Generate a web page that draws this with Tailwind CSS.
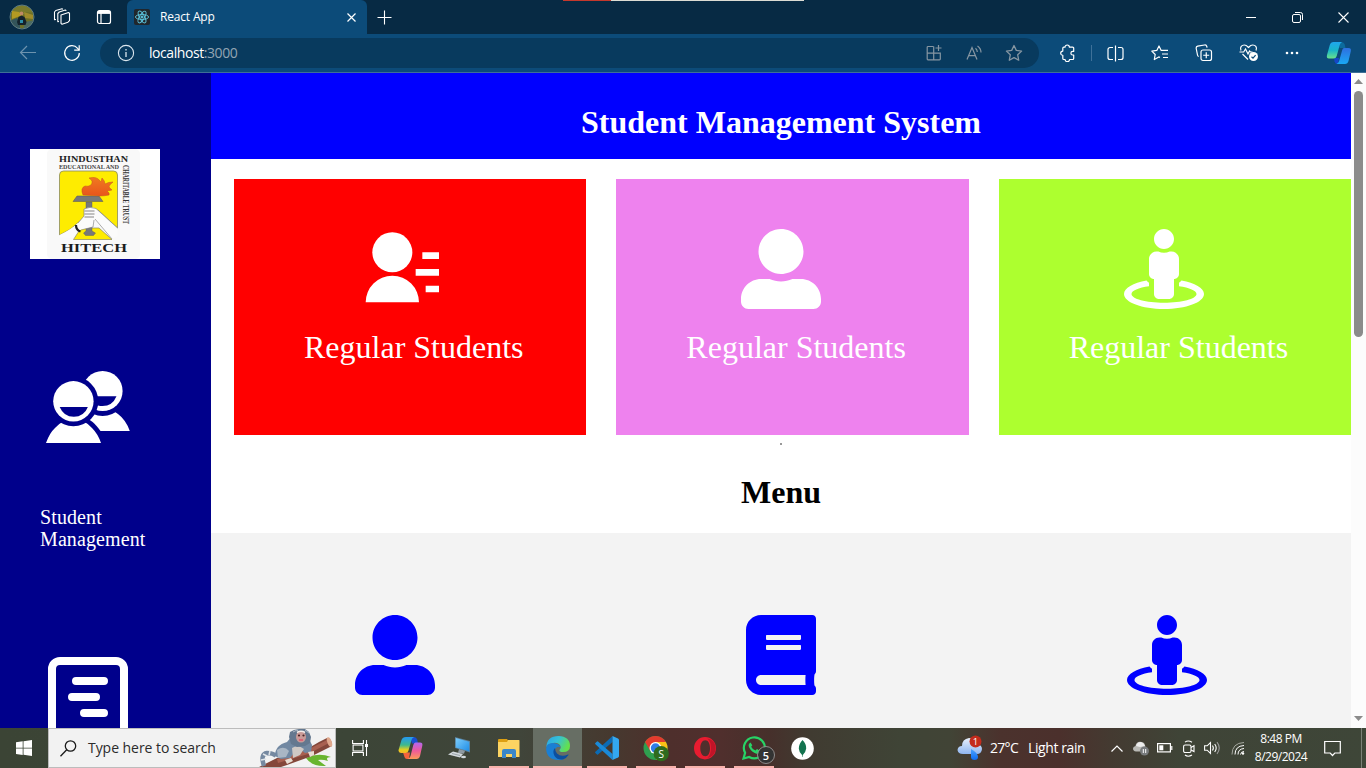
<!DOCTYPE html>
<html lang="en">
<head>
<meta charset="utf-8">
<title>React App</title>
<script src="https://cdn.jsdelivr.net/npm/@tailwindcss/browser@4"></script>
</head>
<body class="w-[1366px] h-[768px] overflow-hidden flex flex-col bg-white font-['Open_Sans','Noto_Sans',sans-serif]">

<svg width="0" height="0" class="absolute">
  <defs>
    <symbol id="user" viewBox="0 0 512 512"><path fill="currentColor" d="M256 288c79.5 0 144-64.5 144-144S335.5 0 256 0 112 64.5 112 144s64.5 144 144 144zm128 32h-55.1c-22.2 10.2-46.9 16-72.9 16s-50.6-5.8-72.9-16H128C57.3 320 0 377.3 0 448v16c0 26.5 21.5 48 48 48h416c26.5 0 48-21.5 48-48v-16c0-70.7-57.3-128-128-128z"/></symbol>
    <symbol id="street" viewBox="0 0 512 512"><path fill="currentColor" d="M367.9 329.76c-4.62 5.3-9.78 10.1-15.9 13.65v22.94c66.52 9.34 112 28.05 112 49.65 0 30.93-93.12 56-208 56S48 446.93 48 416c0-21.6 45.48-40.3 112-49.65v-22.94c-6.12-3.55-11.28-8.35-15.9-13.65C58.87 345.34 0 378.05 0 416c0 53.02 114.62 96 256 96s256-42.98 256-96c0-37.95-58.87-70.66-144.1-86.24zM256 128c35.35 0 64-28.65 64-64S291.35 0 256 0s-64 28.65-64 64 28.65 64 64 64zm-64 192v96c0 17.67 14.33 32 32 32h64c17.67 0 32-14.33 32-32v-96c17.67 0 32-14.33 32-32v-96c0-26.51-21.49-48-48-48h-11.8c-11.07 5.03-23.26 8-36.2 8s-25.13-2.97-36.2-8H208c-26.51 0-48 21.49-48 48v96c0 17.67 14.33 32 32 32z"/></symbol>
    <linearGradient id="gCopA" x1="0" y1="0" x2="0" y2="1"><stop offset="0" stop-color="#1fa6ee"/><stop offset=".5" stop-color="#19b5c8"/><stop offset="1" stop-color="#6be28a"/></linearGradient>
    <linearGradient id="gCopB" x1="0" y1="0" x2="0" y2="1"><stop offset="0" stop-color="#2f6fe0"/><stop offset="1" stop-color="#19a8f5"/></linearGradient>
    <linearGradient id="gCopC" x1="0" y1="0" x2="0" y2="1"><stop offset="0" stop-color="#2499f5"/><stop offset=".5" stop-color="#3fb98c"/><stop offset=".8" stop-color="#e8cf1d"/><stop offset="1" stop-color="#f5b52a"/></linearGradient>
    <linearGradient id="gCopD" x1="0" y1="0" x2="0" y2="1"><stop offset="0" stop-color="#b167f0"/><stop offset=".5" stop-color="#ee5a9a"/><stop offset="1" stop-color="#fb9a58"/></linearGradient>
    <linearGradient id="gEdge" x1="0" y1="0" x2="1" y2=".4"><stop offset="0" stop-color="#2aa4e6"/><stop offset=".5" stop-color="#35c1d8"/><stop offset="1" stop-color="#63e04e"/></linearGradient>
    <linearGradient id="gCloud" x1="0" y1="0" x2="0" y2="1"><stop offset="0" stop-color="#e8f0fc"/><stop offset="1" stop-color="#8fb6f0"/></linearGradient>
    <linearGradient id="gDrop" x1="0" y1="0" x2="0" y2="1"><stop offset="0" stop-color="#4aa3ff"/><stop offset="1" stop-color="#0f6cf0"/></linearGradient>
    <linearGradient id="gFlame" x1="0" y1="0" x2="0" y2="1"><stop offset="0" stop-color="#f07a20"/><stop offset="1" stop-color="#e8551c"/></linearGradient>
    <linearGradient id="gScreen" x1="0" y1="0" x2="1" y2="1"><stop offset="0" stop-color="#7ccdfb"/><stop offset="1" stop-color="#1f8de6"/></linearGradient>
  </defs>
</svg>

<!-- Tab strip -->
<header class="relative flex h-[34px] shrink-0 bg-[#072a44] text-white">
  <div class="absolute top-0 left-[563px] flex h-px w-[241px]"><span class="w-12 bg-[#c5382c]"></span><span class="flex-1 bg-[#dcdcd4]"></span></div>
  <div class="flex w-[44px] items-center justify-end">
    <svg class="mr-[9px]" width="26" height="26" viewBox="0 0 26 26">
      <clipPath id="av"><circle cx="13" cy="13" r="11.6"/></clipPath>
      <g clip-path="url(#av)"><rect width="26" height="26" fill="#6d7028"/><path d="M0 0h26v9l-10-1-8 2-8-3z" fill="#7a7b2c"/><path d="M3 7l7 1 4 3-11 4z" fill="#b39a22"/><path d="M15 8l9 3v4l-8-1z" fill="#a08c2a"/><path d="M0 17l8-3 3 4v8H0z" fill="#33545a"/><path d="M16 18l10-2v10H14z" fill="#4b6a62"/><circle cx="12.500" cy="9.500" r="1.900" fill="#c08a64"/><path d="M9.500 13l3-1.500 3 1.500 2 5-1 3H9l-1-3z" fill="#15222b"/><path d="M11 16h3v3h-3z" fill="#2b8ea8"/></g>
      <circle cx="13" cy="13" r="12" fill="none" stroke="#6c8a92" stroke-width=".8"/>
    </svg>
  </div>
  <div class="flex w-[36px] items-center justify-center">
    <svg width="18" height="18" viewBox="0 0 18 18" fill="none" stroke="#fff" stroke-width="1.1" stroke-linejoin="round"><path d="M8 7l7.500-2.500 1 .7v7.500l-1.500 1.500-6 2-1-.8z"/><path d="M6 13.500l-1.200.2V5.500l1.500-1.500 6-2 1 .8"/><path d="M3 11.500l-1.500.2V4l1.300-1.500L9 .8l1 .6"/></svg>
  </div>
  <div class="flex w-[47px] items-center justify-center pl-[1px]">
    <svg width="16" height="16" viewBox="0 0 16 16" fill="none" stroke="#fff" stroke-width="1.200"><rect x="1.500" y="1.500" width="13" height="13" rx="2"/><path d="M2 3.400h12" stroke-width="3"/><path d="M5 4v10"/></svg>
  </div>
  <div class="flex w-[240px] items-center rounded-t-md bg-[#0c4b79] pl-[7px] pr-[11px]">
    <svg width="16" height="16" viewBox="0 0 16 16" fill="none" stroke="#5cc4dd" stroke-width=".9"><rect width="16" height="16" rx="2" fill="#20262c" stroke="none"/><ellipse cx="8" cy="8" rx="6.600" ry="2.500"/><ellipse cx="8" cy="8" rx="6.600" ry="2.500" transform="rotate(60 8 8)"/><ellipse cx="8" cy="8" rx="6.600" ry="2.500" transform="rotate(120 8 8)"/><circle cx="8" cy="8" r="1.100" fill="#5cc4dd"/></svg>
    <span class="ml-[10px] flex-1 text-[12px] leading-4 tracking-[-0.18px]">React App</span>
    <svg width="9" height="9" viewBox="0 0 9 9" stroke="#fff" stroke-width="1.200"><path d="M.5.5l8 8M8.500.5l-8 8"/></svg>
  </div>
  <div class="flex w-[35px] items-center justify-center"><svg width="15" height="15" viewBox="0 0 15 15" stroke="#fff" stroke-width="1.100"><path d="M7.500.5v14M.5 7.500h14"/></svg></div>
  <div class="ml-auto flex">
    <div class="flex w-[46px] items-center justify-center"><svg width="10" height="10"><path d="M0 5.500h10" stroke="#fff"/></svg></div>
    <div class="flex w-[46px] items-center justify-center"><svg width="11" height="11" viewBox="0 0 11 11" fill="none" stroke="#fff"><rect x=".5" y="2.500" width="8" height="8" rx="1.500"/><path d="M3 .5h5.500a2 2 0 0 1 2 2V8"/></svg></div>
    <div class="flex w-[46px] items-center justify-center"><svg width="11" height="11" viewBox="0 0 11 11" stroke="#fff" stroke-width="1.100"><path d="M.5.5l10 10M10.500.5l-10 10"/></svg></div>
  </div>
</header>

<!-- Toolbar -->
<nav class="flex h-[39px] shrink-0 items-center border-b border-[#3e6f96] bg-[#0c4b79] text-white">
  <div class="flex w-[56px] justify-center"><svg width="18" height="16" viewBox="0 0 18 16" fill="none" stroke="#6d93ae" stroke-width="1.200"><path d="M17 7.500H1.500M8 1L1.500 7.500 8 14"/></svg></div>
  <div class="flex w-[32px] justify-center"><svg width="18" height="18" viewBox="0 0 18 18" fill="none" stroke="#fff" stroke-width="1.200"><path d="M16.300 9A7.300 7.300 0 1 1 14.600 4.300L16 6"/><path d="M16.200 1.200v5h-5"/></svg></div>
  <div class="ml-[12px] flex h-[30px] w-[939px] items-center rounded-full bg-[#083a5e]">
    <svg class="ml-[17px]" width="18" height="18" viewBox="0 0 18 18" fill="none" stroke="#dbe6ee" stroke-width="1.100"><circle cx="9" cy="9" r="7.600"/><path d="M9 8v5M9 5v1.500" stroke-width="1.300"/></svg>
    <span class="ml-[14px] flex-1 text-[14px] leading-5 tracking-[-0.43px]">localhost<span class="text-[#93a5b3]">:3000</span></span>
    <div class="flex w-[40px] justify-center"><svg width="16" height="16" viewBox="0 0 16 16" fill="none" stroke="#8696a2" stroke-width="1.200"><path d="M7.500 1.500H2a.8.8 0 0 0-.8.8V14a.8.8 0 0 0 .8.8h11.500a.8.8 0 0 0 .8-.8V8.200H1.200M7.700 1.500v13.300M12.500 0v6M9.500 3h6"/></svg></div>
    <div class="flex w-[40px] justify-center"><svg width="17" height="16" viewBox="0 0 17 16" fill="none" stroke="#8696a2" stroke-width="1.200"><path d="M1 14.500L6 2.500l5 12M2.700 10.700h6.600M9.500 3.200q1.800 1.500 1.800 3.800M11.500 1q3.500 2.500 3.500 6.500"/></svg></div>
    <div class="mr-[5px] flex w-[40px] justify-center"><svg width="18" height="18" viewBox="0 0 18 18" fill="none" stroke="#8696a2" stroke-width="1.300" stroke-linejoin="round"><path d="M9 1.500l2.300 4.900 5.300.7-3.900 3.700 1 5.400L9 13.600l-4.700 2.600 1-5.400L1.400 7.100l5.300-.7z"/></svg></div>
  </div>
  <div class="flex w-[56px] justify-center pl-[2px]"><svg width="18" height="18" viewBox="0 0 18 18" fill="none" stroke="#fff" stroke-width="1.200" stroke-linejoin="round"><path d="M6 3.200a2.200 2.200 0 0 1 4.400 0h3.300a1 1 0 0 1 1 1v3.200h-1a1.800 1.800 0 0 0 0 3.600h1v3.500a1 1 0 0 1-1 1h-3.200a2.200 2.200 0 0 1-4.400 0H4.800a1 1 0 0 1-1-1v-3.200a2.100 2.100 0 0 1 0-4.200V4.200a1 1 0 0 1 1-1z"/></svg></div>
  <div class="-ml-[4px] h-4 w-px bg-[#3f7199]"></div>
  <div class="flex w-[47px] justify-center"><svg width="17" height="17" viewBox="0 0 17 17" fill="none" stroke="#fff" stroke-width="1.200"><path d="M6 2.500H3a2 2 0 0 0-2 2v8a2 2 0 0 0 2 2h3M11 2.500h3a2 2 0 0 1 2 2v8a2 2 0 0 1-2 2h-3M8.500.5v16"/></svg></div>
  <div class="flex w-[42px] justify-center"><svg width="18" height="17" viewBox="0 0 18 17" fill="none" stroke="#fff" stroke-width="1.200" stroke-linejoin="round"><path d="M9 12.500l-1.200-.6-4.500 2.600.9-5L.8 6.100l5-.7L8 1l2.200 4.400H17M11 9h6M12 12.500h5"/></svg></div>
  <div class="flex w-[45px] justify-center"><svg width="18" height="18" viewBox="0 0 18 18" fill="none" stroke="#fff" stroke-width="1.200"><rect x="6" y="6" width="10.500" height="10.500" rx="2"/><path d="M11.250 8.200v6M8.200 11.250h6M3.700 12.500A2 2 0 0 1 2.500 11L1.200 4.500a2 2 0 0 1 1.500-2.300L9.500 1a2 2 0 0 1 2.300 1.500l.3 1.200"/></svg></div>
  <div class="flex w-[45px] justify-center"><svg width="20" height="18" viewBox="0 0 20 18" fill="none" stroke="#fff" stroke-width="1.200"><path d="M2 6.500C.5 3 3 1 5.300 1 7.500 1 9 3 9.500 3.500 10 3 11.500 1 13.700 1c2.500 0 4.800 2 3.300 5.500M.5 8h4.200l1.800-3 2.500 5 1.500-3 1 1h2M3.500 10l5.500 5.500"/><circle cx="14.500" cy="12.500" r="4.500" fill="#fff" stroke="none"/><path d="M12.500 12.700l1.500 1.400 2.600-3" stroke="#0c4b79"/></svg></div>
  <div class="flex w-[42px] justify-center"><svg width="14" height="4" fill="#fff"><circle cx="2" cy="2" r="1.300"/><circle cx="7" cy="2" r="1.300"/><circle cx="12" cy="2" r="1.300"/></svg></div>
  <div class="ml-[13px] flex w-[26px] justify-center"><svg width="26" height="24" viewBox="0 0 26 24"><path d="M13 1h2.500q2.500 0 3.200 2.500l.8 3.500h-6z" fill="#0c6a9c"/><path d="M8 17h5l-1 6q-2.500.3-3.500-2.500z" fill="#1546c8"/><path d="M7.500 1H16q-1.700.8-2.300 3l-3 11q-.7 2.500-3.200 2.500H3q-2.800 0-2-3.500L3.800 4Q4.700 1 7.500 1z" fill="url(#gCopA)"/><path d="M18 7h4.500q3 0 2.300 3.300L22.500 20q-.8 3-3.500 3h-8.500q2-.8 2.600-3l3-10.500Q16.500 7 18 7z" fill="url(#gCopB)"/></svg></div>
</nav>

<!-- Page -->
<div class="flex h-[655px] shrink-0 overflow-hidden font-['Liberation_Serif',serif]">
  <aside class="flex w-[211px] shrink-0 flex-col bg-[#00008b] pt-[76px] text-white">
    <svg class="ml-[30px] shrink-0" width="130" height="110" viewBox="0 0 130 110" font-family="'Liberation Serif',serif" font-weight="bold">
      <rect width="130" height="110" fill="#fff"/><rect x="17" width="93" height="110" rx="5" fill="#f9f9f9"/>
      <text x="29" y="12.800" font-size="9" textLength="69" lengthAdjust="spacingAndGlyphs" fill="#222">HINDUSTHAN</text>
      <text x="29" y="19.500" font-size="5.500" textLength="60" lengthAdjust="spacingAndGlyphs" fill="#444">EDUCATIONAL AND</text>
      <text transform="translate(92.500 16) rotate(90)" font-size="8" textLength="59" lengthAdjust="spacingAndGlyphs" fill="#333">CHARITABLE TRUST</text>
      <path d="M29.500 86V26q0-4 4-4H83.500q4 0 4 4v53L68 61 50 72Q40 82 29.500 86z" fill="#feec00" stroke="#8a8a60" stroke-width=".8"/>
      <path d="M43.500 90.500L51 79h18l13 11.500z" fill="#feec00" stroke="#8a8a60" stroke-width=".7"/>
      <path d="M56 53h6v29l3.500 2-2 2.500h-8l-2-2.500 2.500-2z" fill="#77787a" stroke="#555" stroke-width=".4"/>
      <path d="M29.500 86Q42 80 48 74l6-7V60q6-3 12-.5L87.500 79v8L82 90 65 70l-1 2-1 6-13 3q-5 3-7 8L29 88z" fill="#fbfbfb"/>
      <path d="M48 74l6-7V60q6-3 12-.5L87.500 79M65 70l17 20M63 78l-12 3M64 71l-1 7" fill="none" stroke="#777" stroke-width=".6"/>
      <path d="M54.500 62h10M54.500 65h10M54.500 68h9.500" stroke="#555" stroke-width=".7"/>
      <path d="M46 76q0 5 4.500 6.500" fill="none" stroke="#222" stroke-width="2.200"/>
      <path d="M47 47h22l4 5.500H43z" fill="#77787a" stroke="#555" stroke-width=".5"/>
      <path d="M53 46q-3-7 2-9 3 1 6-1 3-4-2-7 8-2 11 3 1 2 2-3 3 3 3 6 3-2 8-2-4 3-4 5 2 2 3 3l-5 1q3 2 2 4-5 1-9 1z" fill="url(#gFlame)" stroke="#c4521e" stroke-width=".5"/>
      <text x="31" y="103" font-size="12.500" textLength="66" lengthAdjust="spacingAndGlyphs" fill="#1c1c1c">HITECH</text>
    </svg>
    <svg class="mt-[106px] ml-[40px] shrink-0" width="96" height="86" viewBox="40 365 96 86">
      <mask id="ring"><rect x="40" y="365" width="96" height="86" fill="#fff"/><circle cx="73.400" cy="401.300" r="24.900" fill="#000"/></mask>
      <mask id="back"><rect x="40" y="365" width="96" height="86" fill="#fff"/><circle cx="102.600" cy="391" r="24.900" fill="#000"/><circle cx="73.400" cy="401.300" r="24.900" fill="#000"/><path d="M60 444V425L89 419.500Q95 423 100.500 431v13z" fill="#000"/></mask>
      <g fill="#fff">
        <g mask="url(#ring)"><circle cx="102.600" cy="391" r="20"/><path d="M93 396.300h23.500q-4 9.800-14 9.800-2.500 0-4.500-.6l-6 2z" fill="#00008b"/></g>
        <g mask="url(#back)"><path d="M129.800 431H75q1-8 12-18 8-5 16-5t15 6q8 6 11.800 17z"/></g>
        <circle cx="73.400" cy="401.300" r="20.200"/><path d="M59.700 407h28.200q-4 9.800-14.100 9.800T59.700 407z" fill="#00008b"/>
        <path mask="url(#ring)" d="M46 443q3.500-10 9-15 8-9 18.500-9t18.500 9q6 6 9 15z"/>
      </g>
    </svg>
    <p class="mt-[55px] ml-[40px] text-[20px] leading-[22px] tracking-[0.1px]">Student<br>Management</p>
    <svg class="mt-[107px] ml-[48px] shrink-0" width="80" height="88" viewBox="0 0 80 88" fill="none" stroke="#fff" stroke-width="8" stroke-linecap="round"><path d="M4 88V12a8 8 0 0 1 8-8h56a8 8 0 0 1 8 8v76M28 24h28M24 40h24M36 56h20"/><path d="M8 68v4h4M72 68v4h-4" stroke="none"/></svg>
  </aside>

  <main class="flex w-[1140px] shrink-0 flex-col">
    <h1 class="h-[86px] shrink-0 bg-[#0000ff] pt-[31px] text-center text-[32px] leading-[37px] font-bold text-white">Student Management System</h1>
    <section class="mt-[20px] ml-[23px] flex shrink-0 gap-[30px] text-[32px] leading-[37px] text-white">
      <div class="h-[256px] flex-1 bg-[#ff0000] pt-[50px]">
        <svg class="ml-[125px]" width="80" height="80" viewBox="0 0 24 24" fill="#fff"><circle cx="10" cy="7" r="6"/><path d="M2 22a8 8 0 0 1 16 0zM19 7h5v2h-5zM17 12h7v2h-7zM20 17h4v2h-4z"/></svg>
        <p class="mt-[20px] ml-[70px]">Regular Students</p>
      </div>
      <div class="h-[256px] flex-1 bg-[#ee82ee] pt-[50px]">
        <svg class="ml-[125px]" width="80" height="80"><use href="#user"/></svg>
        <p class="mt-[20px] ml-[70px]">Regular Students</p>
      </div>
      <div class="h-[256px] flex-1 bg-[#adff2f] pt-[50px]">
        <svg class="ml-[125px]" width="80" height="80"><use href="#street"/></svg>
        <p class="mt-[20px] ml-[70px]">Regular Students</p>
      </div>
    </section>
    <div class="mx-auto mt-[8px] h-[2px] w-[2px] shrink-0 bg-[#999]"></div>
    <h2 class="mt-[29px] shrink-0 text-center text-[32px] leading-[37px] font-bold text-black">Menu</h2>
    <section class="mt-[22px] flex flex-1 justify-between bg-[#f3f3f3] pt-[82px] pr-[144px] pl-[144px] text-[#0000ff]">
      <svg width="80" height="80"><use href="#user"/></svg>
      <svg width="80" height="80" viewBox="-32 0 512 512"><path fill="currentColor" d="M448 360V24c0-13.300-10.700-24-24-24H96C43 0 0 43 0 96v320c0 53 43 96 96 96h328c13.300 0 24-10.700 24-24v-16c0-7.500-3.500-14.300-8.900-18.700-4.200-15.400-4.200-59.300 0-74.700 5.400-4.300 8.900-11.100 8.900-18.600zM128 134c0-3.300 2.700-6 6-6h212c3.300 0 6 2.700 6 6v20c0 3.300-2.700 6-6 6H134c-3.300 0-6-2.700-6-6v-20zm0 64c0-3.300 2.700-6 6-6h212c3.300 0 6 2.700 6 6v20c0 3.300-2.700 6-6 6H134c-3.300 0-6-2.700-6-6v-20zm253.400 250H96c-17.700 0-32-14.300-32-32 0-17.600 14.400-32 32-32h285.400c-1.900 17.100-1.900 46.900 0 64z"/></svg>
      <svg width="80" height="80"><use href="#street"/></svg>
    </section>
  </main>

  <div class="flex w-[15px] shrink-0 flex-col items-center bg-[#fcfcfc]">
    <svg class="mt-[6px] shrink-0" width="9" height="5"><path d="M0 5L4.500 0 9 5z" fill="#8b8b8b"/></svg>
    <div class="mt-[7px] h-[246px] w-[9px] shrink-0 rounded-full bg-[#8b8b8b]"></div>
    <svg class="mt-auto mb-[7px] shrink-0" width="9" height="5"><path d="M0 0L4.500 5 9 0z" fill="#8b8b8b"/></svg>
  </div>
</div>

<!-- Taskbar -->
<footer class="flex h-[40px] shrink-0 items-stretch bg-[linear-gradient(90deg,#3b4435_0px,#3c4537_350px,#40453a_520px,#46392f_610px,#4e2f2c_670px,#502f2d_720px,#46302b_770px,#403b31_810px,#3f4436_900px,#414436_950px,#4b322d_1000px,#4b302c_1060px,#443a31_1110px,#3f4437_1180px,#3e4638_1366px)] text-white">
  <div class="flex w-[48px] items-center justify-center"><svg width="16" height="16" viewBox="0 0 16 16" fill="#fff"><path d="M0 2.300L6.700 1.300v6.400H0zM7.500 1.200L16 0v7.700H7.500zM0 8.500h6.700v6.400L0 13.900zM7.500 8.500H16V16l-8.500-1.200z"/></svg></div>
  <div class="flex w-[288px] items-center overflow-hidden border border-[#bcbcbc] bg-[#f2f2f2] text-[#2b2b2b]">
    <svg class="ml-[11px]" width="17" height="17" viewBox="0 0 17 17" fill="none" stroke="#1a1a1a" stroke-width="1.300"><circle cx="10.500" cy="6" r="5.200"/><path d="M6.700 9.800L.5 16.300"/></svg>
    <span class="ml-[11px] w-[135px] shrink-0 text-[14px] leading-5 tracking-[-0.05px] whitespace-nowrap">Type here to search</span>
    <svg class="ml-[36px] shrink-0" width="76" height="38" viewBox="0 0 76 38">
      <path d="M47 29q12-6 25-1-6 0-3 4-6-2-10-1l8 6q-14 1-20-8z" fill="#69b52f"/>
      <path d="M0 38l18-9 30-9 12-7 8-4q5 0 5 8l-20 10-25 9-9 3z" fill="#84473a"/><path d="M18 30l30-9 22-11 2 3-23 12-30 9z" fill="#a86050"/><ellipse cx="70.500" cy="13" rx="2.200" ry="5" transform="rotate(-20 70.500 13)" fill="#e0a88c"/>
      <path d="M5 37Q1 25 8 24q6 0 9 3" fill="none" stroke="#7689a0" stroke-width="4.500"/><path d="M2 31l5-1M4 25l4 2M11 22l-1 4" stroke="#e0e4e8" stroke-width="1.500"/>
      <path d="M16 27q0-11 12-14l6-7h14l5 10-1 7-6 1-5-4-6 4-4 5-9 1z" fill="#7188a2"/>
      <path d="M33 19q6-4 12 1l-4 6-7 3z" fill="#cfc9c5"/><path d="M18 21q7-5 12 1l-3 6-8 1z" fill="#a9b6c4"/>
      <path d="M30 8l1-5 4-2 5-1h6l4 3 2 5-1 6-5 3-8 1-6-3z" fill="#64788f"/><path d="M34 3l4-2 2 2M46 1l4 3" stroke="#aeb9c5" fill="none"/>
      <ellipse cx="42" cy="8" rx="5" ry="5.500" fill="#c99a97"/><path d="M38 3.500q4-2.500 8 0" stroke="#f4ece8" fill="none" stroke-width="1.500"/><circle cx="40" cy="6.500" r="1.100" fill="#4a2525"/><circle cx="44.500" cy="6.500" r="1.100" fill="#4a2525"/><path d="M40 11h4" stroke="#e0526c" stroke-width="1.500"/>
      <path d="M26 31l6-2 2 3-6 3zM49 23l6-1v4l-4 2z" fill="#e8ddd2"/>
    </svg>
  </div>
  <div class="flex flex-1 items-stretch">
    <div class="flex w-[49px] items-center justify-center"><svg width="17" height="16" viewBox="0 0 17 16" fill="none" stroke="#fff" stroke-width="1.100"><path d="M.6 0v3.500h10.800V0M.6 16v-3.500h10.800V16"/><rect x="1.100" y="5" width="9.800" height="6"/><path d="M14.500 0v16"/><rect x="13" y="4" width="3" height="3" fill="#fff" stroke="none"/></svg></div>
    <div class="flex w-[50px] items-center justify-center pl-px"><svg width="25" height="22" viewBox="0 0 25 22"><path d="M12 0h4q2.500 0 3.200 2.500l.8 4h-6z" fill="#1b4fd0"/><path d="M5 15.500h7l-1 6.500h-2q-2 0-2.500-2z" fill="#f4633c"/><path d="M8 0h8q-2 .8-2.500 3l-3 10.500Q10 16 7.500 16H3q-3.200 0-2.300-3.500L3.500 3Q4.500 0 8 0z" fill="url(#gCopC)"/><path d="M17.500 5.500H22q3 0 2.300 3.300L22 19q-.8 3-3.500 3h-8.800q2.300-.8 2.800-3L15.300 8q.6-2.500 2.200-2.500z" fill="url(#gCopD)"/></svg></div>
    <div class="flex w-[49px] items-center justify-center"><svg width="23" height="22" viewBox="0 0 23 22"><path d="M7 0l15 4v11.500L7 11z" fill="#5b7f98"/><path d="M7.800 1l13.400 3.800v9.400L7.800 10.400z" fill="url(#gScreen)"/><path d="M11 12l6 1.700-1 3-6-1z" fill="#8f9aa2"/><path d="M5 14.500l10 2.500-3 3.500-12-3z" fill="#d3d9dd"/><path d="M4 16.500l8 2" stroke="#9aa4ab"/><ellipse cx="15.500" cy="20" rx="2.500" ry="1.300" fill="#d3d9dd"/></svg></div>
    <div class="flex w-[49px] flex-col items-center justify-between pt-[11px]"><svg width="22" height="19" viewBox="0 0 22 19"><path d="M0 1q0-1 1-1h8l1.500 2H20v4H0z" fill="#dd9f12"/><path d="M0 3h9l1-2h11q.5 0 .5.500V18H0z" fill="#fcd462"/><path d="M4 19v-7q0-2 2-2h10q2 0 2 2v7h-4v-4H8v4z" fill="#3a86c8"/></svg><div class="h-[2px] w-[40px] bg-[#f8b1ab]"></div></div>
    <div class="flex w-[49px] flex-col items-center justify-between bg-[#676e64] pt-[8px]"><svg width="24" height="24" viewBox="0 0 24 24"><path d="M.3 11Q1 0 12.500 0 24 .5 24 10q0 6-7 6-4 0-3.500-2 2-1.500 1-4Q12 6 7 7 2 8 .3 11z" fill="url(#gEdge)"/><path d="M.1 13Q0 7 7 7q6.500.5 7.500 4.500-1-1-3-.5-3 1-3 5 .5 6 7 6 4 0 6.500-3-3.500 5-9.500 5Q1 24 .1 13z" fill="#1a7fd4"/><path d="M9 12q-3 3-.5 8 3 4.500 9 3.300 3-1.300 5-4.300.3-.8-.5-.4-7 3-11-1.200-2-2.400-2-5.400z" fill="#0c4f9e"/></svg><div class="h-[2px] w-full bg-[#fcbab4]"></div></div>
    <div class="flex w-[49px] flex-col items-center justify-between pt-[8px]"><svg width="24" height="24" viewBox="0 0 24 24"><path d="M17.500 0v6L3 18.500q-.5.500-1 0L.4 17q-.6-.6 0-1.200z" fill="#0b6bb5"/><path d="M17.500 24v-6L3 5.500q-.5-.5-1 0L.4 7q-.6.600 0 1.200z" fill="#1a8ad8"/><path d="M17.500 0L23 2.500q1 .5 1 1.500v16q0 1-1 1.500L17.500 24z" fill="#33a8f0"/></svg><div class="h-[2px] w-[40px] bg-[#f8b1ab]"></div></div>
    <div class="flex w-[49px] flex-col items-center justify-between pt-[8px]"><svg width="27" height="26" viewBox="-1.500 0 27 26" class="-mb-[2px]"><circle cx="12" cy="12" r="12" fill="#2f9e4f"/><path d="M12 12L1.600 6A12 12 0 0 1 22.400 6z" fill="#e33b2e"/><path d="M12 6h10.400A12 12 0 0 1 13 24z" fill="#fbc116"/><path d="M1.600 6l5.200 9L12 12V6z" fill="#e33b2e"/><circle cx="12" cy="12" r="6" fill="#fff"/><circle cx="12" cy="12" r="4.700" fill="#2f7de8"/><circle cx="17.700" cy="17.700" r="7.600" fill="#2f6b1e"/><text x="17.700" y="21.500" font-size="10" text-anchor="middle" fill="#fff" font-family="'Open Sans',sans-serif">S</text></svg><div class="h-[2px] w-[40px] bg-[#f8b1ab]"></div></div>
    <div class="flex w-[49px] flex-col items-center justify-between pt-[8px]"><svg width="24" height="24" viewBox="0 0 24 24"><path fill-rule="evenodd" d="M12 1a11 11.200 0 1 0 0 22.400A11 11.200 0 1 0 12 1zm.3 3.200c3 0 4.700 3.500 4.700 8s-1.700 8-4.700 8-5-3.500-5-8 2-8 5-8z" fill="#e81c30"/><path d="M14.500 2.500q8 2 8 9.700t-8 9.700q3.500-3.500 3.500-9.700t-3.500-9.700z" fill="#c01428"/></svg><div class="h-[2px] w-[40px] bg-[#f8b1ab]"></div></div>
    <div class="relative flex w-[49px] flex-col items-center justify-between pt-[8px]"><svg width="24" height="24" viewBox="0 0 24 24"><path d="M1.500 22.500l1.600-5.700A10.500 10.500 0 1 1 7.200 21z" fill="none" stroke="#27d366" stroke-width="2.200"/><path d="M8.500 6.500q-3 1.800-1.300 5 2.500 5 7.300 6.200 3 .2 3.500-3l-3-1.700-1.500 1.600q-3-1.200-4.300-3.900l1.100-1.500z" fill="#27d366"/></svg><div class="h-[2px] w-[40px] bg-[#f8b1ab]"></div>
      <span class="absolute top-[19px] left-[29px] flex size-[16px] items-center justify-center rounded-full bg-[#333] text-[11px] leading-none font-semibold outline outline-[#8b8b8b]">5</span></div>
    <div class="flex w-[49px] items-center justify-center"><svg width="23" height="23" viewBox="0 0 23 23"><circle cx="11.500" cy="11.500" r="11.300" fill="#fff"/><path d="M11.500 3q4 4 3.700 8.500-.5 4-3.400 6.500l-.1 2h-.4l-.2-2Q8 15.500 7.800 11.500 7.800 7 11.500 3z" fill="#13734f"/></svg></div>
  </div>

  <div class="flex w-[409px] items-center">
    <svg class="shrink-0" width="27" height="26" viewBox="0 0 27 26"><path d="M6 19q-5 0-5.500-4Q1 11 5 11q0-7 7-8 6 0 8 6 5 1 5 5-.500 5-5 5z" fill="url(#gCloud)"/><path d="M14 14q7 4 7 8 0 3-3.500 3T14 22z" fill="url(#gDrop)"/><circle cx="18.500" cy="6.500" r="6" fill="#c42b1c"/><text x="18.500" y="10" font-size="9.500" text-anchor="middle" fill="#fff" font-family="'Open Sans',sans-serif">1</text></svg>
    <span class="ml-[6px] w-[38px] shrink-0 text-[14px] leading-5 tracking-[-0.7px]">27°C</span>
    <span class="w-[76px] shrink-0 text-[14px] leading-5 tracking-[-0.4px] whitespace-nowrap">Light rain</span>
    <svg class="ml-[7px] shrink-0" width="12" height="7" viewBox="0 0 12 7" fill="none" stroke="#fff" stroke-width="1.200"><path d="M.5 6.500L6 1l5.500 5.500"/></svg>
    <svg class="ml-[10px] shrink-0" width="16" height="15" viewBox="0 0 16 15"><path d="M3 10.500Q0 10 0 7.500 0 5.500 2.500 5 3 1 7 .8q4 0 5 3.200l1 5-3 1.500z" fill="#b9b9b5"/><path d="M3 5Q4 1 8 1q3 1 4 4l-5 1z" fill="#ededed"/><circle cx="11.500" cy="10" r="4.500" fill="#777a7c"/><path d="M10.300 8v4M12.700 8v4" stroke="#fff"/></svg>
    <svg class="ml-[8px] shrink-0" width="16" height="10" viewBox="0 0 16 10" fill="none" stroke="#fff" stroke-width="1.200"><rect x=".6" y=".6" width="12.800" height="8.300"/><rect x="2.300" y="2.300" width="4" height="5" fill="#fff" stroke="none"/><path d="M14.800 3v4"/></svg>
    <svg class="ml-[10px] shrink-0" width="12" height="17" viewBox="0 0 12 17" fill="none" stroke="#fff" stroke-width="1.100"><rect x=".6" y="5" width="7.400" height="7.500" rx="1.500"/><path d="M8 7.500l3-1.700v5.800L8 10M2 2.200q3-2.500 7 0M2 15q3 2.500 7 0"/></svg>
    <svg class="ml-[9px] shrink-0" width="17" height="14" viewBox="0 0 17 14" fill="none" stroke="#fff" stroke-width="1.100"><path d="M.6 4.800h2.600L6.500 1.500v11L3.200 9.200H.6zM8.500 4.500q1.700 2.500 0 5M10.700 3q3 4 0 8"/><path d="M13 1.200q4.500 5.800 0 11.600" stroke="#999"/></svg>
    <svg class="ml-[10px] shrink-0" width="14" height="14" viewBox="0 0 14 14" fill="none" stroke="#fff"><path d="M1 13.500Q1 2 13 1.500" stroke="#a5a8a0"/><path d="M4 13.500Q4 5 13 4.500M7 13.500Q7 8 13 7.500"/><path d="M9.500 13.500q.5-3 3.500-3"/><circle cx="12" cy="12.500" r="1.200" fill="#fff" stroke="none"/></svg>
    <div class="ml-[6px] flex w-[60px] shrink-0 flex-col items-center text-[12px] leading-[18px] tracking-[-0.5px]"><span>8:48 PM</span><span>8/29/2024</span></div>
    <svg class="ml-[13px] shrink-0" width="17" height="17" viewBox="0 0 17 17" fill="none" stroke="#fff" stroke-width="1.200"><path d="M.7 1.500h15.600v11.500h-5.500L8.500 15.500 6.200 13H.7z"/></svg>
    <div class="mr-1 ml-auto h-full w-px bg-[#7b8177]"></div>
  </div>
</footer>
</body>
</html>
